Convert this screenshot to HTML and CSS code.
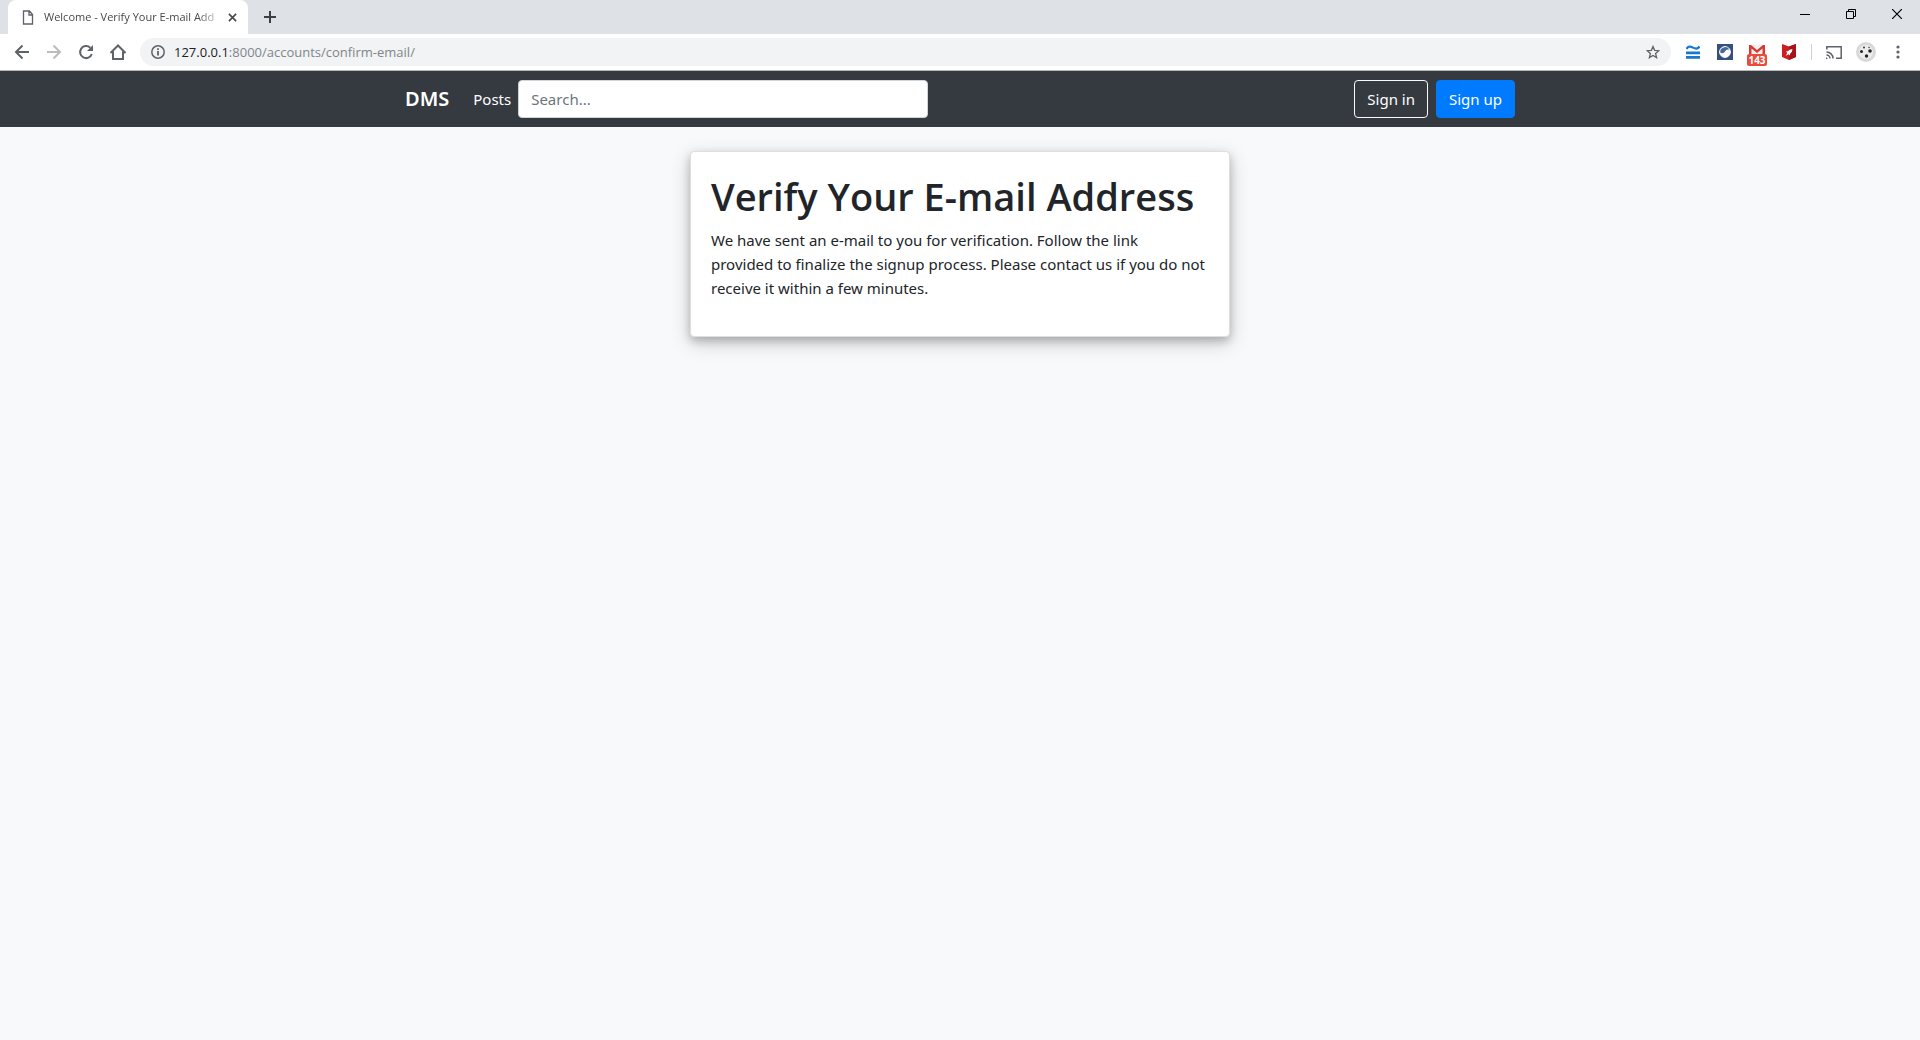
FILE: index.html
```html
<!DOCTYPE html>
<html lang="en">
<head>
<meta charset="utf-8">
<title>Welcome - Verify Your E-mail Address</title>
<link rel="stylesheet" href="styles.css">
</head>
<body>
<div class="browser">
  <div class="tab-strip">
    <div class="tab">
      <svg class="tab-icon" width="12" height="15" viewBox="0 0 12 15" fill="none" stroke="#5f6368" stroke-width="1.3"><path d="M1.5 1h6l3 3.5V14h-9zM7 1v4h4"/></svg>
      <span class="tab-title">Welcome - Verify Your E-mail Add</span>
      <button class="icon-button tab-close" aria-label="Close tab"><svg width="9" height="9" viewBox="0 0 10 10" stroke="#45494d" stroke-width="1.8"><path d="M1 1l8 8M9 1l-8 8"/></svg></button>
    </div>
    <button class="icon-button new-tab" aria-label="New tab"><svg width="12" height="12" viewBox="0 0 12 12" stroke="#3c4043" stroke-width="2"><path d="M6 0v12M0 6h12"/></svg></button>
    <div class="window-controls">
      <button class="icon-button" aria-label="Minimize"><svg width="10" height="10" viewBox="0 0 10 10"><path d="M0 5h10v1H0z"/></svg></button>
      <button class="icon-button" aria-label="Restore"><svg width="10" height="10" viewBox="0 0 10 10" fill="none" stroke="#000"><path d="M.5 2.5h7v7h-7zM2.500 2.500v-2h7v7h-2"/></svg></button>
      <button class="icon-button" aria-label="Close"><svg width="10" height="10" viewBox="0 0 10 10" stroke="#000" stroke-width="1.200"><path d="M0 0l10 10M10 0L0 10"/></svg></button>
    </div>
  </div>
  <div class="toolbar">
    <div class="nav-buttons">
      <button class="icon-button" aria-label="Back"><svg width="16" height="16" viewBox="0 0 16 16" fill="none" stroke="#5f6368" stroke-width="2"><path d="M15 8H2M8.500 1.500L2 8l6.500 6.500"/></svg></button>
      <button class="icon-button" aria-label="Forward"><svg width="16" height="16" viewBox="0 0 16 16" fill="none" stroke="#babcbe" stroke-width="2"><path d="M1 8h13M7.500 1.500L14 8l-6.500 6.500"/></svg></button>
      <button class="icon-button" aria-label="Reload"><svg width="16" height="16" viewBox="0 0 16 16"><path fill="none" stroke="#5f6368" stroke-width="2" d="M13.800 10A6 6 0 1 1 12.300 3.800"/><path fill="#5f6368" d="M15 1v6H9z"/></svg></button>
      <button class="icon-button" aria-label="Home"><svg width="18" height="16" viewBox="0 0 18 16" fill="none" stroke="#5f6368" stroke-width="2"><path d="M1.500 9L9 1.500 16.500 9M4 7.500V15h10V7.500"/></svg></button>
    </div>
    <div class="address-bar">
      <svg width="14" height="14" viewBox="0 0 14 14" fill="none" stroke="#5f6368" stroke-width="1.500"><circle cx="7" cy="7" r="6.200"/><path stroke-width="1.800" d="M7 6v4.500M7 3.300v1.700"/></svg>
      <span class="url"><span class="host">127.0.0.1</span>:8000/accounts/confirm-email/</span>
      <button class="icon-button star" aria-label="Bookmark"><svg width="14" height="14" viewBox="0 0 14 14" fill="none" stroke="#5f6368" stroke-width="1.300"><path d="M7 1.500l1.600 3.800 4.200.4-3.200 2.800 1 4.100L7 10.400l-3.600 2.200 1-4.100L1.200 5.700l4.200-.4z"/></svg></button>
    </div>
    <div class="extensions">
      <button class="icon-button" aria-label="Approximate"><svg width="14" height="14" viewBox="0 0 14 14" fill="none" stroke="#1976d2" stroke-width="2.800"><path d="M0 12.300h14M0 7.800h14"/><path stroke-width="2.200" d="M.6 4C2 1 4 1 7 2.600s5 1.400 6.500-1.200"/></svg></button>
      <button class="icon-button" aria-label="Wave"><svg width="16" height="16" viewBox="0 0 16 16"><path fill="#344f80" d="M0 0h16v16H0z"/><circle cx="8" cy="8" r="5.400" fill="#fff" stroke="#fff" stroke-width="1"/><path fill="#4b6796" d="M3.200 8.500A4.900 4.900 0 0 1 12.300 5.600C10 5 9 6 8 7.500S5.500 10 3.200 8.500z"/></svg></button>
      <button class="icon-button mail" aria-label="Mail, 143 unread"><svg width="16" height="16" viewBox="0 0 16 16"><path fill="#f1f1f1" d="M1 1h14v12H1z"/><path fill="#d63a30" d="M0 1h2l6 5 6-5h2v12h-2.500V4.500L8 9 2.500 4.500V13H0z"/></svg><span class="badge">143</span></button>
      <button class="icon-button" aria-label="Shield"><svg width="14" height="16" viewBox="0 0 14 16"><path fill="#cc1f24" d="M0 0l7 2.500L14 0v13l-7 3-7-3z"/><path fill="#a51419" d="M7 2.500L14 0v13l-7 3z"/><path fill="#fff" d="M10.500 5L7.500 5.700 6 7.300l-2 .3L5.200 9l-1.400 2.700L6.500 10.300 7.800 11.500l.4-2L9.800 8z"/></svg></button>
      <span class="divider"></span>
      <button class="icon-button" aria-label="Cast"><svg width="16" height="13" viewBox="0 0 16 13" fill="none" stroke="#5f6368" stroke-width="1.500"><path d="M.8 3.500V.8h14.400v11.400H10M.5 6A6.500 6.500 0 0 1 7 12.500M.5 9A3.500 3.500 0 0 1 4 12.500"/><path fill="#5f6368" stroke="none" d="M0 11l2 2H0z"/></svg></button>
      <button class="icon-button" aria-label="Profile"><svg width="20" height="20" viewBox="0 0 20 20"><circle cx="10" cy="10" r="10" fill="#d9d9d9"/><circle cx="10" cy="10" r="7" fill="#ececec"/><g fill="#222"><circle cx="5.500" cy="9.500" r="1.500"/><circle cx="14" cy="9" r="1.800"/><circle cx="10.500" cy="14" r="1.700"/><circle cx="8" cy="5.500" r=".9"/><circle cx="13" cy="5.500" r=".7"/></g></svg></button>
      <button class="icon-button" aria-label="Menu"><svg width="4" height="14" viewBox="0 0 4 14" fill="#5f6368"><circle cx="2" cy="2" r="1.600"/><circle cx="2" cy="7" r="1.600"/><circle cx="2" cy="12" r="1.600"/></svg></button>
    </div>
  </div>
</div>
<nav class="navbar">
  <div class="container nav-row">
    <a class="brand" href="#">DMS</a>
    <a class="nav-link" href="#">Posts</a>
    <input class="search" type="search" placeholder="Search..." aria-label="Search">
    <div class="account">
      <button class="btn btn-outline">Sign in</button>
      <button class="btn btn-primary">Sign up</button>
    </div>
  </div>
</nav>
<main class="container">
  <section class="card">
    <h1>Verify Your E-mail Address</h1>
    <p>We have sent an e-mail to you for verification. Follow the link<br>provided to finalize the signup process. Please contact us if you do not<br>receive it within a few minutes.</p>
  </section>
</main>
</body>
</html>
```
FILE: styles.css
```css
* { box-sizing: border-box; }
body {
  margin: 0;
  min-height: 100vh;
  background: #f8f9fb;
  color: #212529;
  font: 15px/24px "Noto Sans", "Open Sans", sans-serif;
}
button, input { font: inherit; }
.icon-button {
  display: flex;
  align-items: center;
  justify-content: center;
  padding: 0;
  border: 0;
  background: none;
}
.icon-button svg { flex-shrink: 0; }
.browser { background: #fff; border-bottom: 1px solid #b5b8b8; }
.tab-strip { display: flex; height: 34px; padding-left: 8px; background: #dee1e6; }
.tab {
  display: flex;
  align-items: center;
  width: 240px;
  padding: 0 8px 0 14px;
  border-radius: 8px 8px 0 0;
  background: #fff;
}
.tab-title {
  flex: 1;
  margin-left: 10px;
  white-space: nowrap;
  font-family: "Open Sans", sans-serif;
  font-size: 11px;
  color: #45494d;
  mask-image: linear-gradient(to right, #000 85%, transparent);
}
.tab-close { width: 16px; }
.new-tab { width: 28px; margin-left: 8px; }
.window-controls { display: flex; margin-left: auto; height: 28px; }
.window-controls .icon-button { width: 46px; }
.toolbar { display: flex; align-items: center; height: 36px; padding: 0 14px; }
.nav-buttons { display: flex; gap: 16px; }
.nav-buttons .icon-button { width: 16px; }
.address-bar {
  display: flex;
  flex: 1;
  align-items: center;
  height: 28px;
  margin: 0 14px;
  padding: 0 11px;
  border-radius: 14px;
  background: #f1f3f4;
}
.url { margin-left: 9px; font-family: "Open Sans", sans-serif; font-size: 13px; color: #80868b; }
.host { color: #202124; }
.star { margin-left: auto; }
.extensions { display: flex; align-items: center; gap: 16px; }
.extensions .icon-button { width: 16px; }
.mail { position: relative; }
.badge {
  position: absolute;
  top: 10px;
  left: -2px;
  width: 20px;
  border-radius: 2px;
  background: #e94b3c;
  color: #fff;
  font-size: 10px;
  font-weight: 700;
  line-height: 12px;
}
.divider { width: 1px; height: 16px; margin: 0 -2px; background: #cfd1d4; }
.container { width: 100%; max-width: 1140px; margin: 0 auto; padding: 0 15px; }
.navbar { padding: 8px 0; background: #343a40; }
.nav-row { display: flex; align-items: center; height: 40px; }
.navbar a { color: #fff; text-decoration: none; }
.brand { font-size: 20px; font-weight: 600; line-height: 30px; }
.nav-link { margin: 0 7px 0 24px; }
.search {
  width: 410px;
  height: 38px;
  padding: 6px 12px;
  border: 1px solid #ced4da;
  border-radius: 4px;
  background: #fff;
  color: #495057;
}
.search::placeholder { color: #6c757d; }
.account { display: flex; gap: 8px; margin-left: auto; }
.btn { padding: 6px 12px; border: 1px solid; border-radius: 4px; color: #fff; line-height: 24px; }
.btn-outline { border-color: #f8f9fa; background: none; }
.btn-primary { border-color: #007bff; background: #007bff; }
.card {
  width: 100%;
  max-width: 540px;
  margin: 24px auto 0;
  padding: 20px;
  border: 1px solid #dfdfdf;
  border-radius: 4px;
  background: #fff;
  box-shadow: 0 4px 8px rgba(0, 0, 0, .2), 0 6px 20px rgba(0, 0, 0, .19);
}
h1 {
  margin: 0 0 8px;
  font-family: "Open Sans", sans-serif;
  font-size: 38px;
  font-weight: 600;
  line-height: 48px;
  white-space: nowrap;
}
p { margin: 0 0 16px; white-space: nowrap; }
```
